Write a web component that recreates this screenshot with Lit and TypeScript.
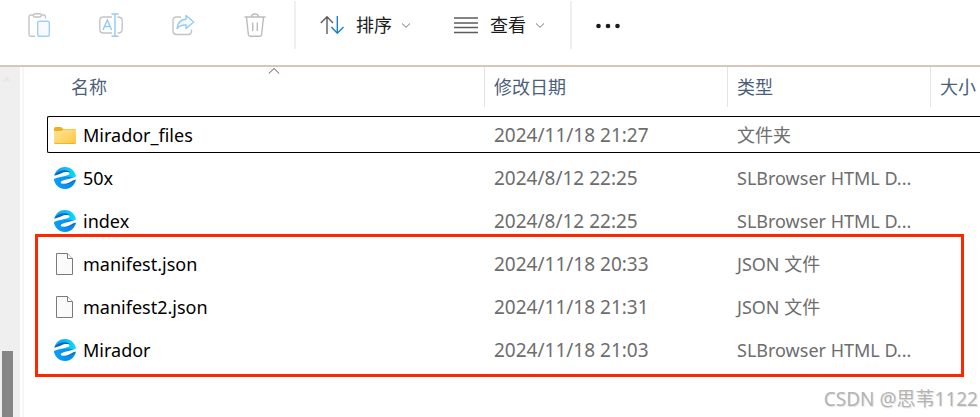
import { LitElement, html, css, svg, nothing } from "lit";
import { customElement } from "lit/decorators.js";

type Kind = "folder" | "web" | "doc";
interface Entry {
  name: string;
  kind: Kind;
  date: string;
  type: string;
}

const entries: Entry[] = [
  { name: "Mirador_files", kind: "folder", date: "2024/11/18 21:27", type: "文件夹" },
  { name: "50x", kind: "web", date: "2024/8/12 22:25", type: "SLBrowser HTML D..." },
  { name: "index", kind: "web", date: "2024/8/12 22:25", type: "SLBrowser HTML D..." },
];

const marked: Entry[] = [
  { name: "manifest.json", kind: "doc", date: "2024/11/18 20:33", type: "JSON 文件" },
  { name: "manifest2.json", kind: "doc", date: "2024/11/18 21:31", type: "JSON 文件" },
  { name: "Mirador", kind: "web", date: "2024/11/18 21:03", type: "SLBrowser HTML D..." },
];

@customElement("file-icon")
class FileIcon extends LitElement {
  static properties = { kind: { type: String } };
  declare kind: Kind;

  static styles = css`
    :host { display: block; width: 22px; height: 24px; }
    svg { display: block; }
  `;

  private shape() {
    if (this.kind === "folder") {
      return svg`
        <defs><linearGradient id="f" x1="0" y1="0" x2="1" y2="1">
          <stop offset="0" stop-color="#ffe69a"/><stop offset="1" stop-color="#fcc63e"/>
        </linearGradient></defs>
        <path d="M0 5.5Q0 4 1.5 4H6.5Q7.300 4 8 4.700L9.500 6H20.500Q22 6 22 7.500V12H0Z" fill="#eeb01f"/>
        <path d="M0 8H7.500L9.500 6.500H21Q22 6.500 22 7.500V19.500Q22 21 20.500 21H1.500Q0 21 0 19.500Z" fill="url(#f)"/>
        <path d="M.5 20.500H21.500" stroke="#eeb535"/>`;
    }
    if (this.kind === "web") {
      return svg`
        <defs>
          <linearGradient id="a" x1="0" y1="0" x2="1" y2="0"><stop offset="0" stop-color="#149cf0"/><stop offset="1" stop-color="#08dcff"/></linearGradient>
          <linearGradient id="b" x1="0" y1="0" x2="1" y2="0"><stop offset="0" stop-color="#08a0fc"/><stop offset="1" stop-color="#0a84e4"/></linearGradient>
        </defs>
        <circle cx="11" cy="12" r="11" fill="url(#a)"/>
        <path d="M0 12.500L13 10.500L22 11.500A11 11 0 0 1 0 12Z" fill="url(#b)"/>
        <path d="M.8 8.500C4 5 9 3.800 12.500 4.400C15 4.800 16 6 15.600 7L9 7.500L.8 9.500ZM7 17C10 19 15 18.500 20.500 15L21.500 13.500L14 14Z" fill="#0a68bd"/>
        <path d="M-.5 9.500C4 9.800 7 6.700 11.500 6C14.500 5.600 16.200 6.600 15.300 7.900C14 10.200 6 9.800 -.5 13.300Z" fill="#fff"/>
        <path d="M22.500 13.300C18.500 13.800 15.500 17 11.500 17.700C8.500 18.200 6.300 17.400 6.800 16C7.800 13.800 16 13.600 22.500 10.300Z" fill="#fff"/>`;
    }
    return svg`
      <path d="M2.500 1.500H13.500L18.500 6.500V22.500H2.500Z" fill="#fafafa" stroke="#7b7b7b"/>
      <path d="M13.500 1.500V6.500H18.500" fill="#fff" stroke="#7b7b7b"/>`;
  }

  render() {
    return html`<svg width="22" height="24" viewBox="0 0 22 24" aria-hidden="true">${this.shape()}</svg>`;
  }
}

const chevron = html`<svg width="12" height="12" viewBox="0 0 12 12" fill="none" stroke="#777" aria-hidden="true"><path d="M2 4.500L6 8.300L10 4.500"/></svg>`;

@customElement("app-root")
class AppRoot extends LitElement {
  static styles = css`
    :host {
      display: flex;
      flex-direction: column;
      min-height: 100vh;
      position: relative;
      overflow: hidden;
      background: #fff;
      color: #000;
      font: 18px/24px "Noto Sans", "Noto Sans CJK SC", sans-serif;
    }
    button {
      display: flex;
      align-items: center;
      padding: 0;
      border: 0;
      background: none;
      color: #1b1b1b;
      font: inherit;
    }
    svg { display: block; flex: none; }
    .toolbar {
      display: flex;
      align-items: center;
      gap: 24px;
      padding: 1px 27px 16px;
      border-bottom: 2px solid #d9c6b8;
    }
    .edit { display: flex; gap: 48px; padding-right: 3px; }
    .views { display: flex; gap: 42px; }
    .views span { margin: 0 8px 0 12px; }
    .sep { width: 2px; height: 48px; background: #efefef; }
    .body { flex: 1; display: flex; }
    .rail {
      flex: none;
      display: flex;
      flex-direction: column;
      justify-content: space-between;
      width: 20px;
      margin-right: 2px;
      background: #efefef;
    }
    .up {
      width: 0;
      margin: 10px 0 0 2px;
      border: 5px solid transparent;
      border-top-width: 0;
      border-bottom-color: #e8e8e8;
    }
    .thumb { width: 11px; height: 66px; margin-left: 2px; background: #868686; }
    .list { flex: 1; min-width: 0; border-left: 2px solid #f6f6f6; }
    table { width: 100%; table-layout: fixed; border-collapse: collapse; }
    th, td { padding: 0; text-align: left; font-weight: 400; white-space: nowrap; }
    th { height: 46px; vertical-align: top; position: relative; color: #4b5f7a; }
    th div { height: 40px; line-height: 40px; padding-left: 9px; border-left: 1px solid #e3e3e3; }
    th.name div { padding-left: 46px; border-color: transparent; }
    .date { width: 243px; }
    .type { width: 203px; }
    .size { width: 50px; }
    .caret { position: absolute; top: 0; left: 39px; right: 0; margin: 0 auto; }
    td { height: 43px; padding-left: 10px; color: #6d6d6d; }
    td.when { font-size: 19px; }
    td.file { padding-left: 30px; color: #000; }
    .label { display: flex; align-items: center; gap: 7px; }
    tr.focus, tbody.marked { position: relative; }
    .ring {
      position: absolute;
      inset: 3px 0 3px 23px;
      border: 1px solid #000;
      border-right: 0;
      border-radius: 2px 0 0 2px;
      pointer-events: none;
    }
    .frame {
      position: absolute;
      inset: -8px 16px -6px 11px;
      border: 3px solid #ff2600;
      pointer-events: none;
    }
    .mark {
      position: absolute;
      right: 2px;
      bottom: 6px;
      color: #b4b4b4;
      font-size: 19px;
      text-shadow: 1px 1px 1px #e4e4e4;
    }
  `;

  private row(e: Entry, overlay: "ring" | "frame" | "" = "") {
    return html`<tr class=${overlay === "ring" ? "focus" : nothing}>
      <td class="file"><div class="label"><file-icon .kind=${e.kind}></file-icon>${e.name}</div>${overlay ? html`<div class=${overlay}></div>` : nothing}</td>
      <td class="when">${e.date}</td>
      <td>${e.type}</td>
      <td></td>
    </tr>`;
  }

  render() {
    return html`
      <div class="toolbar" role="toolbar">
        <div class="edit">
          <button aria-label="粘贴">
            <svg width="24" height="24" viewBox="0 0 24 24" fill="none" stroke="#c4c4c4" stroke-width="1.400">
              <path d="M8 23.300H3.700Q2 23.300 2 21.600V3.700Q2 2 3.700 2H6M14.500 2H16.800Q18.500 2 18.500 3.700V5.500"/>
              <rect x="6.300" y=".8" width="8" height="3.200" rx="1.600"/>
              <rect x="10.700" y="8.200" width="11.600" height="15" rx="1.800" stroke="#a0cff2" fill="#f8fbfe"/>
            </svg>
          </button>
          <button aria-label="重命名">
            <svg width="24" height="24" viewBox="0 0 24 24" fill="none" stroke="#c4c4c4" stroke-width="1.400">
              <path d="M13 4H4.500Q.8 4 .8 7.500V16.500Q.8 20 4.500 20H13M18.500 4Q23.200 4 23.200 7.500V16.500Q23.200 20 18.500 20"/>
              <path d="M4 17L8.300 7L12.600 17M5.500 13.500H11M12.500 1H19.500M16 1V23.300M12.500 23.300H19.500" stroke="#93caf3"/>
            </svg>
          </button>
          <button aria-label="共享">
            <svg width="24" height="24" viewBox="0 0 24 24" fill="none" stroke="#c4c4c4" stroke-width="1.400">
              <path d="M10 4H5.500Q2 4 2 7.500V18Q2 21.500 5.500 21.500H17Q20.500 21.500 20.500 18V16.500"/>
              <path d="M15 2.500L22.700 9L15 15.500V12Q9.500 11.500 6 15.500Q7 6.700 15 6.200Z" stroke="#93caf3" fill="#f8fbfe" stroke-linejoin="round"/>
            </svg>
          </button>
          <button aria-label="删除">
            <svg width="24" height="24" viewBox="0 0 24 24" fill="none" stroke="#bcbcbc" stroke-width="1.400">
              <path d="M1.500 4H22.500M8.500 4Q8.500 1 12 1T15.500 4M3.500 4L5.300 21.300Q5.500 23.200 7.300 23.200H16.700Q18.500 23.200 18.700 21.300L20.500 4M9.700 9.500V18M14.300 9.500V18"/>
            </svg>
          </button>
        </div>
        <div class="sep"></div>
        <div class="views">
          <button>
            <svg width="24" height="24" viewBox="0 0 24 24" fill="none" stroke-width="1.400">
              <path d="M7 21V3.500M.8 10L7 3.700L13 10" stroke="#5c5c5c"/>
              <path d="M17.300 3V20.500M11.300 14L17.300 20.300L23.500 14" stroke="#1c80d2"/>
            </svg><span>排序</span>${chevron}
          </button>
          <button>
            <svg width="24" height="24" viewBox="0 0 24 24" fill="none" stroke="#5c5c5c" stroke-width="1.400">
              <path d="M0 5H24M0 10H24M0 14.500H24M0 19.500H24"/>
            </svg><span>查看</span>${chevron}
          </button>
        </div>
        <div class="sep"></div>
        <button aria-label="更多">
          <svg width="24" height="24" viewBox="0 0 24 24" fill="#1b1b1b">
            <circle cx="2.500" cy="13" r="2.300"/><circle cx="12" cy="13" r="2.300"/><circle cx="21.500" cy="13" r="2.300"/>
          </svg>
        </button>
      </div>
      <div class="body">
        <div class="rail"><div class="up"></div><div class="thumb"></div></div>
        <div class="list">
          <table>
            <thead>
              <tr>
                <th class="name"><div>名称</div>
                  <svg class="caret" width="12" height="8" viewBox="0 0 12 8" fill="none" stroke="#555"><path d="M.8 6.500L6 1.500L11.200 6.500"/></svg>
                </th>
                <th class="date"><div>修改日期</div></th>
                <th class="type"><div>类型</div></th>
                <th class="size"><div>大小</div></th>
              </tr>
            </thead>
            <tbody>${entries.map((e, i) => this.row(e, i === 0 ? "ring" : ""))}</tbody>
            <tbody class="marked">${marked.map((e, i) => this.row(e, i === 0 ? "frame" : ""))}</tbody>
          </table>
        </div>
      </div>
      <div class="mark">CSDN @思苇1122</div>
    `;
  }
}
